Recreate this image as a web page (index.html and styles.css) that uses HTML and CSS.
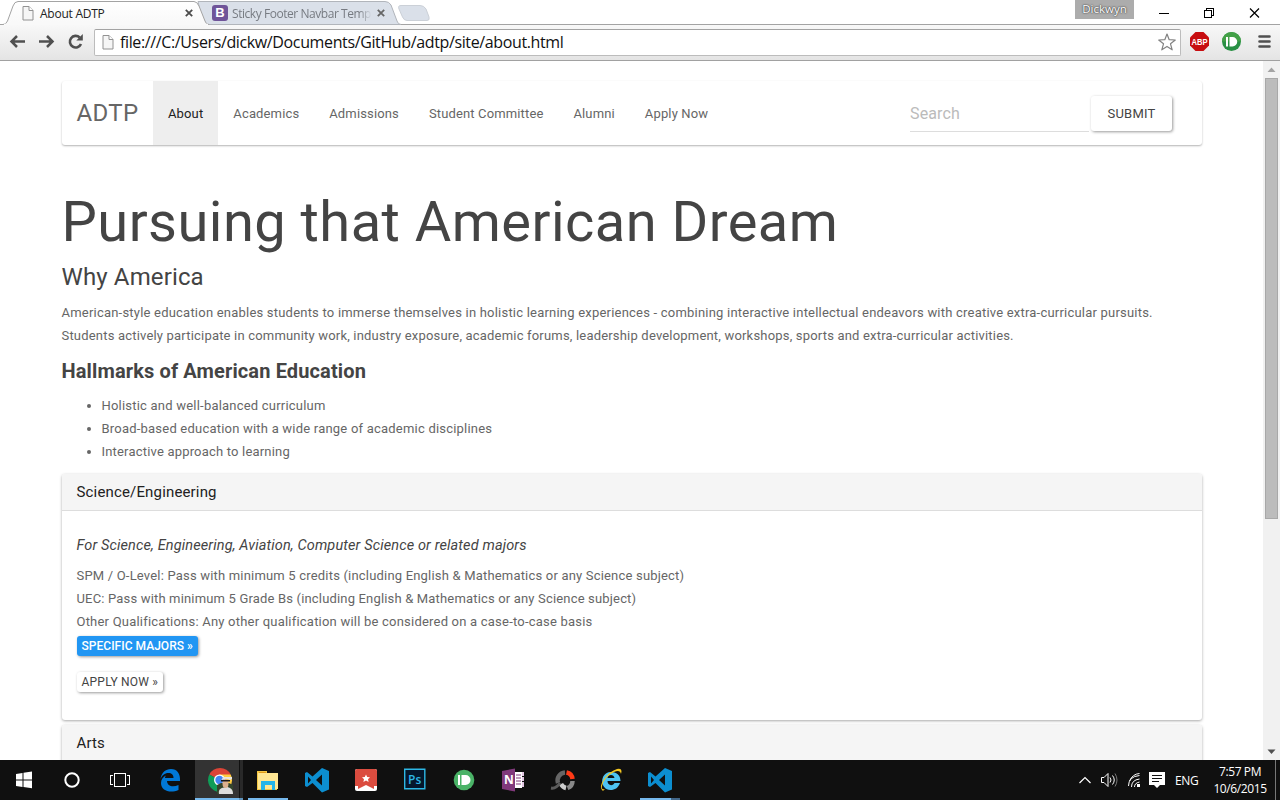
FILE: index.html
```html
<!DOCTYPE html>
<html lang="en">
<head>
<meta charset="utf-8">
<title>About ADTP</title>
<link rel="stylesheet" href="styles.css">
</head>
<body>
<div class="screen">
  <header class="tabstrip">
    <svg class="tab-shapes" width="1280" height="25" viewBox="0 0 1280 25">
      <defs>
        <linearGradient id="active" x1="0" y1="0" x2="0" y2="1"><stop offset="0" stop-color="#fff"/><stop offset="1" stop-color="#f8f8f8"/></linearGradient>
      </defs>
      <path d="M0 24.5H1280" stroke="#a3a3a3"/>
      <path d="M198 1.500H385Q389 1.500 391 5L397 21Q398 24.500 401 24.500H203Z" fill="#dae0e9" stroke="#b1b5bb"/>
      <path d="M401 5.500H420Q424 5.500 426 9L429 17Q430 20.500 427 20.500H407Q404 20.500 402.500 17L399 9Q397.500 5.500 401 5.500Z" fill="#dae0e9" stroke="#cbd0d7"/>
      <path d="M0 24.500H3Q6 24.500 7.500 21L13 6Q14.500 1.500 18 1.500H194Q197 1.500 199 6L205 21Q206 24.500 209 24.500V26H0Z" fill="url(#active)" stroke="#a3a3a3"/>
      <path d="M4 24.500H208" stroke="#f9f9f9" stroke-width="1.500"/>
    </svg>
    <div class="tab tab-active">
      <svg class="page-icon" width="12" height="15" viewBox="0 0 12 15"><path d="M1 .5h6l4 4v9.500H1z" fill="#f6f6f6" stroke="#929292"/><path d="M7 .5v4h4" fill="#fff" stroke="#929292"/></svg>
      <span class="tab-title">About ADTP</span>
      <svg class="close" width="8" height="8" viewBox="0 0 8 8"><path d="M.8.8l6.400 6.400M7.200.8L.8 7.200" stroke="#4c4c4c" stroke-width="1.800"/></svg>
    </div>
    <div class="tab tab-back">
      <span class="bootstrap-icon">B</span>
      <span class="tab-title fade">Sticky Footer Navbar Temp</span>
      <svg class="close" width="8" height="8" viewBox="0 0 8 8"><path d="M.8.8l6.400 6.400M7.200.8L.8 7.200" stroke="#666" stroke-width="1.800"/></svg>
    </div>
    <span class="profile">Dickwyn</span>
    <svg class="window-controls" width="110" height="24" viewBox="1150 0 110 24" fill="none" stroke="#000" shape-rendering="crispEdges">
      <path d="M1159 13.500h10M1204.500 10.500h7v7h-7zM1206.500 10v-2h7v7h-2"/>
      <path d="M1250 8.500l9 9M1259 8.500l-9 9" shape-rendering="auto" stroke-width="1.200"/>
    </svg>
  </header>
  <div class="toolbar">
    <svg class="navigation" width="78" height="20" viewBox="8 33 78 20" fill="none" stroke="#505050" stroke-width="2.500">
      <path d="M11.500 42.500H25M17 37l-5.500 5.500L17 48M39 42.500h13.500M47 37l5.500 5.500L47 48"/>
      <path d="M81 45a5.800 5.800 0 1 1-1.300-6.500" stroke-width="2.600"/><path d="M82.800 35v6.500h-6.500z" fill="#505050" stroke="none"/>
    </svg>
    <div class="omnibox">
      <svg class="page-icon" width="12" height="15" viewBox="0 0 12 15"><path d="M1 .5h6l4 4v9.500H1z" fill="#f6f6f6" stroke="#929292"/><path d="M7 .5v4h4" fill="#fff" stroke="#929292"/></svg>
      <span class="url">file:///C:/Users/dickw/Documents/GitHub/adtp/site/about.html</span>
      <svg width="18" height="18" viewBox="0 0 18 18"><path d="M9 1l2.200 5.700 6.100.3-4.800 3.800 1.700 6L9 13.400l-5.200 3.400 1.700-6L.7 7l6.100-.3z" fill="#fff" stroke="#828282" stroke-width="1.200" stroke-linejoin="round"/></svg>
    </div>
    <svg class="extensions" width="90" height="24" viewBox="1186 31 90 24">
      <path d="M1195.500 33h8l5.500 5.500v8l-5.500 5.500h-8l-5.500-5.500v-8z" fill="#c70d10"/>
      <text x="1199.500" y="46" class="abp-text" textLength="16" lengthAdjust="spacingAndGlyphs">ABP</text>
      <circle cx="1231.500" cy="42.500" r="9.500" fill="#299044"/><path d="M1222 42.500a9.500 9.500 0 0 1 19 0z" fill="#43a047"/>
      <path d="M1226 38h2v9.500h-2zM1229.500 38h3a4.700 4.700 0 0 1 0 9.500h-3z" fill="#fff"/>
      <path d="M1259.500 37.500h10M1259.500 42.500h10M1259.500 47.500h10" stroke="#505050" stroke-width="2.600" stroke-linecap="round"/>
    </svg>
  </div>
  <div class="viewport">
    <main class="container">
      <nav class="navbar">
        <a class="brand">ADTP</a>
        <a class="item current">About</a><a class="item">Academics</a><a class="item">Admissions</a><a class="item">Student Committee</a><a class="item">Alumni</a><a class="item">Apply Now</a>
        <form class="search"><div class="search-field">Search</div><button class="submit" type="button">SUBMIT</button></form>
      </nav>
      <h1>Pursuing that American Dream</h1>
      <h4>Why America</h4>
      <p>American-style education enables students to immerse themselves in holistic learning experiences - combining interactive intellectual endeavors with creative extra-curricular pursuits.<br><span class="snug">Students actively participate in community work, industry exposure, academic forums, leadership development, workshops, sports and extra-curricular activities.</span></p>
      <h5>Hallmarks of American Education</h5>
      <ul>
        <li>Holistic and well-balanced curriculum</li>
        <li>Broad-based education with a wide range of academic disciplines</li>
        <li class="snug">Interactive approach to learning</li>
      </ul>
      <section class="panel">
        <div class="panel-heading">Science/Engineering</div>
        <div class="panel-body">
          <h6>For Science, Engineering, Aviation, Computer Science or related majors</h6>
          <div class="snug">SPM / O-Level: Pass with minimum 5 credits (including English &amp; Mathematics or any Science subject)</div>
          <div class="snugger">UEC: Pass with minimum 5 Grade Bs (including English &amp; Mathematics or any Science subject)</div>
          <div>Other Qualifications: Any other qualification will be considered on a case-to-case basis</div>
          <div class="actions"><a class="btn primary">SPECIFIC MAJORS »</a><a class="btn">APPLY NOW »</a></div>
        </div>
      </section>
      <section class="panel"><div class="panel-heading">Arts</div><div class="panel-body"></div></section>
    </main>
    <div class="scrollbar">
      <svg width="17" height="17" viewBox="0 0 17 17"><path d="M4.500 11l4-4.500 4 4.500z" fill="#a3a3a3"/></svg>
      <div class="thumb"></div>
      <svg width="17" height="17" viewBox="0 0 17 17"><path d="M4.500 6.500h8l-4 4.500z" fill="#505050"/></svg>
    </div>
  </div>
  <footer class="taskbar">
    <svg class="apps" width="700" height="40" viewBox="0 760 700 40">
      <path d="M16 774l6.500-1v6.500H16zM23.500 772.800l8.500-1.200v7.900h-8.500zM16 780.500h6.500v6.500l-6.500-1zM23.500 780.500H32v7.700l-8.500-1.200z" fill="#fff"/>
      <circle cx="72" cy="780" r="6.700" fill="none" stroke="#fff" stroke-width="2"/>
      <path d="M114.500 773.500h11v13h-11zM113 775.500h-2.500v9h2.500M127 775.500h2.500v9H127" fill="none" stroke="#fff" shape-rendering="crispEdges"/>
      <path d="M160.500 779c1-6.500 5-10 10.500-10 6 0 9.500 4.500 9 12h-13c.3 5.500 6 6.500 11.500 4v5c-8 3.500-17.500 1-17.500-7 0-3.500 2-6 5-7.500-.8 1-1 2-1 2.500h8.500c0-3.500-2-5-5-5-4 0-6.500 2.500-8 6z" fill="#0078d7"/>
      <path d="M195 760h44v40h-44z" fill="#333"/><path d="M240 760h3v40h-3z" fill="#292929"/>
      <path d="M195 798h44v2h-44z" fill="#76b9ed"/><path d="M239 798h4v2h-4z" fill="#5e94be"/>
      <path d="M219.500 780l-10.200-5.500a12 12 0 0 1 21.400 0z" fill="#db4437"/><path d="M209.300 774.500a12 12 0 0 0 10.200 17.500l4-8-4-4z" fill="#0f9d58"/><path d="M230.700 774.500H219.500v5.500l4 4-4 8a12 12 0 0 0 11.200-17.500z" fill="#ffcd40"/>
      <circle cx="219.500" cy="780" r="5.500" fill="#fff"/><circle cx="219.500" cy="780" r="4.200" fill="#4285f4"/>
      <path d="M217 785l4-2h8l4 2v9h-16z" fill="#34462d"/><path d="M219 794c-1-5 2-6 7-7 4 0 7 2 7 7z" fill="#ddd"/><ellipse cx="225.500" cy="783.500" rx="3" ry="4.500" fill="#dcb08f"/><path d="M221 781q4-4 9-1l2-1v-2l-9 0z" fill="#e9e5df"/><path d="M221 780h9v1.500h-9z" fill="#1d1a19"/>
      <path d="M257 771h10v3h10v16h-20z" fill="#f5c744"/><path d="M258 773h20v16h-20z" fill="#ffe793"/><path d="M259 772h7v1h-7z" fill="#e19c1a"/>
      <path d="M261 781h14v9h-3v-5h-7v5h-4z" fill="#25b5e9"/><path d="M248 798h40v2h-40z" fill="#76b9ed"/>
      <path id="vscode" fill-rule="evenodd" d="M322 768l7 3v18.500l-7 3-9.500-9.500-5.500 4-2-1v-13l2-1 5.500 4.500zM322 774.500l-6 5.500 6 5.500zM308 776.500v7l3-3.500z" fill="#0c8ed0"/>
      <path d="M357 769h18q2 0 2 2v18q0 2-2 2h-18q-2 0-2-2v-18q0-2 2-2z" fill="#fff"/><path d="M357 769h18q2 0 2 2v15h-3v3l-8-4-8 4v-3h-3v-15q0-2 2-2z" fill="#db4c3f"/><path d="M366 774.500l1.200 2.500 2.800.3-2 2 .6 2.700-2.600-1.400-2.600 1.400.6-2.700-2-2 2.800-.3z" fill="#fff"/>
      <path d="M404.700 769.200h20.100v19.600h-20.100z" fill="#05162b" stroke="#2db7e5" stroke-width="1.400"/><text x="408" y="784" class="ps-text">Ps</text>
      <circle cx="464" cy="780" r="10.300" fill="#4ab367"/><path d="M458 775h2v10h-2zM461.500 775h4a5 5 0 0 1 0 10h-4z" fill="#fff"/>
      <path d="M502 771l13-2.500v23L502 789z" fill="#80397b"/><path d="M515 772h7v16h-7z" fill="#fff"/><path d="M516 775h5M516 778h5M516 781h5M516 784h5" stroke="#80397b"/><path d="M522 772h2v4h-2zM522 777h2v4h-2zM522 782h2v5h-2z" fill="#e4c8e4"/><text x="504" y="784" class="note-text">N</text>
      <g fill="none" stroke-width="4.500"><path d="M558 783a8 8 0 0 1 7-10.500" stroke="#666"/><path d="M566.500 772.500a7.500 7.500 0 0 1 6 6.500" stroke="#ff3a16"/><path d="M572.500 781a7.500 7.500 0 0 1-5 7" stroke="#888"/><path d="M566 788a7.500 7.500 0 0 1-5-4" stroke="#ccc"/><path d="M560 783q-4 6-9 5" stroke="#5c5c5c" stroke-width="3"/></g>
      <path d="M620.500 781h-13c0 4 4.500 6 7 2h5.500c-2 5-5 7-9.500 7-10.500 0-11.500-17 0-18 6 0 10 3 10 9zM607.500 778h7c-.5-4-6.500-4-7 0z" fill="#4ec4f3"/>
      <path d="M602 790q-3-3 2-11 6-8 13-10 6-1 4 5-1-5-7-2-10 5-12 14-1 4 3 3-2 3-3 1z" fill="#f5c720"/>
      <use href="#vscode" x="343"/><path d="M640 798h31v2h-31z" fill="#76b9ed"/><path d="M671 798h9v2h-9z" fill="#426789"/>
    </svg>
    <svg class="tray" width="96" height="40" viewBox="1072 760 96 40" fill="none" stroke="#fff">
      <path d="M1079.500 783l5.500-5.500 5.500 5.500" stroke-width="1.200"/>
      <path d="M1101.500 777.500h2.500l4-4v13l-4-4h-2.500zM1110 777.500q2 2.500 0 5M1112.500 775.500q3.500 4.500 0 9"/><path d="M1115 773.500q4 6.500 0 13" stroke="#777"/>
      <path d="M1128.500 786q0-9.500 11-10.500M1131.500 787q0-7 8-8M1134.500 787q0-4 5-5M1129.500 781q3-7 10-7.500"/><path d="M1137 784h3v3h-3z" fill="#fff" stroke="none"/>
      <path d="M1149 772h16v13h-5l-3 3-3-3h-5z" fill="#fff" stroke="none"/><path d="M1152 775.500h10M1152 778.500h10M1152 781.500h7" stroke="#111"/>
    </svg>
    <span class="language">ENG</span>
    <div class="clock"><span>7:57 PM</span><span>10/6/2015</span></div>
    <div class="show-desktop"></div>
  </footer>
</div>
</body>
</html>
```
FILE: styles.css
```css
* { box-sizing: border-box; }
body { margin: 0; background: #fff; }
.screen { width: 1280px; height: 800px; display: flex; flex-direction: column; overflow: hidden; font-family: "Open Sans", "Noto Sans", sans-serif; }
.screen svg { display: block; flex: none; }

.tabstrip { position: relative; display: flex; height: 25px; flex: none; background: #fff; }
.tab-shapes { position: absolute; left: 0; top: 0; }
.tab { position: relative; display: flex; align-items: center; height: 26px; font-size: 12px; color: #222; white-space: nowrap; }
.tab-active { width: 210px; padding-left: 22px; }
.tab-active .tab-title { width: 145px; margin-left: 6px; letter-spacing: -.25px; }
.tab-back { width: 195px; padding-left: 2px; color: #777b82; }
.tab-back .tab-title { width: 141px; margin-left: 4px; letter-spacing: -.45px; }
.fade { -webkit-mask-image: linear-gradient(to right, #000 90%, transparent 99%); mask-image: linear-gradient(to right, #000 90%, transparent 99%); }
.tab-back .close { margin-left: 4px; }
.bootstrap-icon { width: 16px; height: 16px; flex: none; border-radius: 3px; background: #6f5499; color: #fff; font: bold 13px/16px "Liberation Sans", sans-serif; text-align: center; }
.profile { position: relative; width: 59px; height: 19px; margin-left: 670px; background: #acacac; color: #fff; font-size: 11.500px; line-height: 18px; text-align: center; text-shadow: 0 0 2px #333, 0 0 1px #444; }
.window-controls { position: relative; margin-left: 16px; }

.toolbar { display: flex; align-items: center; height: 36px; flex: none; padding: 0 4px 1px 8px; background: linear-gradient(#f8f8f8, #e4e4e4); border-bottom: 1px solid #a1a1a1; }
.omnibox { display: flex; align-items: center; width: 1087px; height: 27px; margin-left: 8px; padding: 0 4px 0 7px; background: #fff; border: 1px solid #bcbcbc; border-top-color: #a3a3a3; border-radius: 2px; }
.url { flex: 1; margin-left: 6px; font-size: 16px; line-height: 24px; letter-spacing: -.37px; color: #111; white-space: nowrap; }
.extensions { margin-left: 5px; }
.abp-text { font: bold 9px "Liberation Sans", sans-serif; fill: #fff; text-anchor: middle; }

.viewport { display: flex; height: 699px; flex: none; overflow: hidden; }
.container { width: 1263px; padding: 20px 61px 0 61.500px; font: 13px/23px Roboto, sans-serif; letter-spacing: .213px; color: #666; }
.snug { letter-spacing: .19px; }
.snugger { letter-spacing: .17px; }
.navbar { display: flex; align-items: center; height: 64px; margin-bottom: 47px; border-radius: 3px; box-shadow: 0 1px 2px rgba(0,0,0,.3); letter-spacing: .14px; }
.brand { width: 91.500px; padding: 1px 0 0 15px; font-size: 24px; letter-spacing: .35px; }
.item { height: 64px; padding: 0 15px; line-height: 65px; white-space: nowrap; }
.current { background: #eee; color: #212121; }
.search { display: flex; align-items: center; margin: 0 30px 0 auto; }
.search-field { width: 179px; height: 37px; padding-top: 7px; font-size: 16px; color: #bbb; box-shadow: inset 0 -1px #ddd; }
.submit { width: 81px; height: 35px; margin-left: 2px; padding: 1px 0 0; border: 0; border-radius: 3px; background: #fff; color: #444; font: 13px Roboto, sans-serif; letter-spacing: .2px; box-shadow: 1px 1px 3px rgba(0,0,0,.4); }
h1, h4, h5, h6 { margin: 0 0 11.500px; color: #444; font-weight: 400; line-height: 1.1; white-space: nowrap; letter-spacing: .13px; }
h1 { margin-bottom: 10.500px; font-size: 56px; letter-spacing: .47px; }
h4 { margin-bottom: 10.500px; font-size: 24px; }
h5 { font-size: 20px; font-weight: 700; }
p { margin: 0 0 13.500px; white-space: nowrap; }
ul { margin: 0 0 11.500px; padding-left: 40px; }
.panel { margin-bottom: 5px; border-radius: 3px; box-shadow: 0 1px 3px rgba(0,0,0,.35); }
.panel-heading { height: 37px; padding: 0 15px; border-bottom: 1px solid #ddd; border-radius: 3px 3px 0 0; background: #f5f5f5; color: #212121; font-size: 15px; line-height: 36px; letter-spacing: .16px; }
.panel-body { height: 209px; padding: 26.500px 15px 0; }
h6 { margin-bottom: 10.500px; font-size: 14.500px; font-style: italic; }
.actions { display: flex; flex-direction: column; align-items: flex-start; gap: 16px; padding-top: 2.500px; }
.btn { padding: 0 5px; border-radius: 3px; background: #fff; color: #444; font-size: 12px; line-height: 20px; letter-spacing: .22px; box-shadow: 1px 1px 3px rgba(0,0,0,.4); }
.primary { background: #2196f3; color: #fff; font-weight: 500; letter-spacing: .03px; }
.scrollbar { width: 17px; background: #f1f1f1; display: flex; flex-direction: column; }
.thumb { width: 13px; height: 441px; margin: 0 2px auto; background: #bcbcbc; border: 1px solid #a8a8a8; }

.taskbar { display: flex; align-items: center; height: 40px; flex: none; background: #101010; color: #fff; font-size: 12px; }
.tray { margin-left: 372px; }
.language { width: 33px; margin-left: 7px; letter-spacing: -.4px; }
.clock { display: flex; flex-direction: column; width: 64px; padding-bottom: 1px; align-items: center; line-height: 17px; letter-spacing: -.4px; }
.show-desktop { width: 1px; height: 40px; margin-left: 3px; background: #777; }
.ps-text { font: 600 12px "Open Sans", sans-serif; fill: #2db7e5; }
.note-text { font: bold 12px "Open Sans", sans-serif; fill: #fff; }
```
